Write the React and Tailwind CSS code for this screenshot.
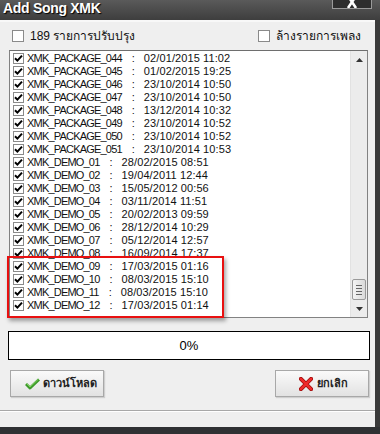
import React from 'react'

const rows = [
    ['XMK_PACKAGE_044', '02/01/2015 11:02'],
    ['XMK_PACKAGE_045', '01/02/2015 19:25'],
    ['XMK_PACKAGE_046', '23/10/2014 10:50'],
    ['XMK_PACKAGE_047', '23/10/2014 10:50'],
    ['XMK_PACKAGE_048', '13/12/2014 10:32'],
    ['XMK_PACKAGE_049', '23/10/2014 10:52'],
    ['XMK_PACKAGE_050', '23/10/2014 10:52'],
    ['XMK_PACKAGE_051', '23/10/2014 10:53'],
    ['XMK_DEMO_01', '28/02/2015 08:51'],
    ['XMK_DEMO_02', '19/04/2011 12:44'],
    ['XMK_DEMO_03', '15/05/2012 00:56'],
    ['XMK_DEMO_04', '03/11/2014 11:51'],
    ['XMK_DEMO_05', '20/02/2013 09:59'],
    ['XMK_DEMO_06', '28/12/2014 10:29'],
    ['XMK_DEMO_07', '05/12/2014 12:57'],
    ['XMK_DEMO_08', '16/09/2014 17:37'],
    ['XMK_DEMO_09', '17/03/2015 01:16'],
    ['XMK_DEMO_10', '08/03/2015 15:10'],
    ['XMK_DEMO_11', '08/03/2015 15:10'],
    ['XMK_DEMO_12', '17/03/2015 01:14'],
]

const CheckBox = ({ checked }) => (
    <div className="w-[11px] h-[11px] border border-[#8a8a8a] bg-white flex items-center justify-center shrink-0">
        {checked && (
            <svg width="9" height="9" viewBox="0 0 9 9">
                <path d="M1 4.2 L3.4 6.6 L8 1.6" stroke="#000" strokeWidth="2" fill="none" />
            </svg>
        )}
    </div>
)

const App = () => {
    return (
        <div className="w-[380px] h-[434px] overflow-hidden bg-[#363636] flex flex-col relative" style={{ fontFamily: '"Liberation Sans", "Noto Sans", Tahoma, sans-serif' }}>
            {/* title bar */}
            <div className="h-[20px] shrink-0 flex justify-between bg-gradient-to-b from-[#5a5a5a] to-[#3e3e3e]">
                <div className="pl-[3px] text-[14px] font-bold text-white leading-[17px] tracking-[-0.3px] [text-shadow:1px_1px_1px_#000]">Add Song XMK</div>
                <div className="mr-[8px] w-[40px] h-[9px] border-x border-b border-[#9a9a9a] bg-[#2e2e2e] overflow-hidden flex justify-center">
                    <svg width="14" height="9" viewBox="0 0 14 9">
                        <path d="M3 -4 L11 8 M11 -4 L3 8" stroke="#fff" strokeWidth="2.6" />
                    </svg>
                </div>
            </div>

            <div className="flex-1 flex">
                {/* dialog body */}
                <div className="w-[375px] h-[407px] bg-[#efefef] flex flex-col">
                    <div className="h-[2px] bg-[#f8f8f8]" />
                    {/* options row */}
                    <div className="mt-[6px] h-[16px] flex items-center text-[12px] text-[#111]">
                        <div className="w-[258px] flex items-center pl-[12px] gap-[6px]">
                            <div className="w-[12px] h-[12px] border border-[#8a8a8a] bg-white" />
                            <span>189 รายการปรับปรุง</span>
                        </div>
                        <div className="flex items-center gap-[6px]">
                            <div className="w-[12px] h-[12px] border border-[#8a8a8a] bg-white" />
                            <span>ล้างรายการเพลง</span>
                        </div>
                    </div>

                    {/* list */}
                    <div className="mt-[6px] ml-[9px] w-[359px] h-[268px] border border-[#828282] border-t-[#6e6e6e] bg-white flex">
                        <div className="flex-1 pt-[1px]">
                            {rows.map(([name, date]) => (
                                <div key={name} className="h-[13px] flex items-center pl-[3px] text-[11px] text-[#111] whitespace-pre">
                                    <CheckBox checked />
                                    <span className="ml-[3px] tracking-[-0.8px]">{name}</span>
                                    <span className="ml-[10px] mr-[9px]">:</span>
                                    <span className="tracking-[0.1px]">{date}</span>
                                </div>
                            ))}
                        </div>
                        {/* scrollbar */}
                        <div className="w-[17px] bg-[#ececec] border-l border-[#e2e2e2] flex flex-col items-center">
                            <div className="h-[17px] flex items-center justify-center">
                                <svg width="7" height="4" viewBox="0 0 7 4"><path d="M0 4 L3.5 0 L7 4Z" fill="#333" /></svg>
                            </div>
                            <div className="flex-1" />
                            <div className="w-[14px] h-[21px] rounded-[2px] border border-[#9a9a9a] bg-gradient-to-r from-[#f4f4f4] to-[#dadada] flex flex-col items-center justify-center gap-[2px]">
                                <div className="w-[6px] h-[1px] bg-[#666]" />
                                <div className="w-[6px] h-[1px] bg-[#666]" />
                                <div className="w-[6px] h-[1px] bg-[#666]" />
                                <div className="w-[6px] h-[1px] bg-[#666]" />
                            </div>
                            <div className="h-[17px] flex items-center justify-center">
                                <svg width="7" height="4" viewBox="0 0 7 4"><path d="M0 0 L3.5 4 L7 0Z" fill="#333" /></svg>
                            </div>
                        </div>
                    </div>

                    {/* progress */}
                    <div className="mt-[13px] ml-[8px] w-[362px] h-[29px] border border-black bg-white flex items-center justify-center text-[13px] text-black">
                        0%
                    </div>

                    {/* buttons */}
                    <div className="mt-[10px] flex justify-between pl-[10px] pr-[6px]">
                        <button className="w-[94px] h-[27px] border border-[#a8a8a8] bg-gradient-to-b from-[#fafafa] to-[#e2e2e2] shadow-[1px_1px_1px_#cfcfcf] flex items-center pl-[14px] gap-[3px] text-[11px] font-bold text-[#222]">
                            <svg width="15" height="12" viewBox="0 0 15 12">
                                <path d="M1 6 L5 10 L14 1.5" stroke="#3d9a2a" strokeWidth="3" fill="none" strokeLinejoin="round" />
                                <path d="M1.6 5.6 L5 9 L13.4 1.2" stroke="#7fd35e" strokeWidth="1" fill="none" />
                            </svg>
                            <span>ดาวน์โหลด</span>
                        </button>
                        <button className="w-[94px] h-[27px] border border-[#a8a8a8] bg-gradient-to-b from-[#fafafa] to-[#e2e2e2] shadow-[1px_1px_1px_#cfcfcf] flex items-center pl-[23px] gap-[4px] text-[11px] font-bold text-[#222]">
                            <svg width="14" height="14" viewBox="0 0 15 15">
                                <path d="M2 2 L13 13 M13 2 L2 13" stroke="#9c0d0d" strokeWidth="4.4" strokeLinecap="round" />
                                <path d="M2 2 L13 13 M13 2 L2 13" stroke="#ee2a2a" strokeWidth="2.8" strokeLinecap="round" />
                            </svg>
                            <span>ยกเลิก</span>
                        </button>
                    </div>

                    <div className="mt-[13px] h-[1px] bg-[#a8a8a8]" />
                    <div className="h-[1px] bg-white" />
                </div>
                <div className="flex-1 bg-[#3a3a3a]" />
            </div>
            <div className="h-[7px] shrink-0 bg-[#2f3133]" />

            {/* annotation box */}
            <div className="absolute left-[7px] top-[256px] w-[217px] h-[62px] border-2 border-[#e81010] shadow-[2px_3px_4px_rgba(0,0,0,0.35)]" />
        </div>
    )
}

export default App
